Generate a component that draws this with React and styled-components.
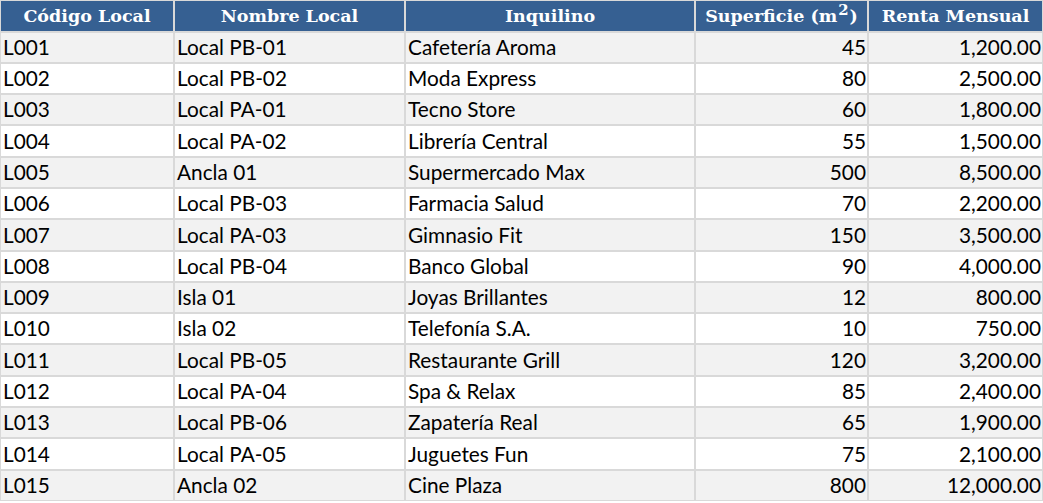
import React from "react";
import styled, { createGlobalStyle } from "styled-components";

const Global = createGlobalStyle`
  html, body { margin: 0; padding: 0; background: #ffffff; }
  body { font-family: Lato, "Liberation Sans", sans-serif; }
`;

const Table = styled.table`
  border-collapse: separate;
  border-spacing: 0;
  table-layout: fixed;
  width: 1043px;
`;

const HeadCell = styled.th`
  background: #366092;
  color: #ffffff;
  font-family: "DejaVu Serif", "Liberation Serif", serif;
  font-weight: bold;
  font-size: 17.5px;
  line-height: 1;
  text-align: center;
  border: 1px solid #d9d9d9;
  height: 27.5px;
  padding: 2px 2px 0;
  white-space: nowrap;
  overflow: hidden;
`;

const Row = styled.tr`
  background: ${(p) => (p.$alt ? "#f2f2f2" : "#ffffff")};
`;

const Cell = styled.td`
  font-family: Lato, "Liberation Sans", sans-serif;
  font-size: 20.8px;
  color: #000000;
  text-align: ${(p) => (p.$num ? "right" : "left")};
  border: 1px solid #d9d9d9;
  height: 29.3px;
  padding: 0 1px 0 2px;
  line-height: 1;
  white-space: nowrap;
  overflow: hidden;
`;

const Sup = styled.sup`
  font-size: 0.85em;
  line-height: 0;
  vertical-align: 0.45em;
  padding: 0 1px;
`;

const data = [
  ["L001", "Local PB-01", "Cafetería Aroma", "45", "1,200.00"],
  ["L002", "Local PB-02", "Moda Express", "80", "2,500.00"],
  ["L003", "Local PA-01", "Tecno Store", "60", "1,800.00"],
  ["L004", "Local PA-02", "Librería Central", "55", "1,500.00"],
  ["L005", "Ancla 01", "Supermercado Max", "500", "8,500.00"],
  ["L006", "Local PB-03", "Farmacia Salud", "70", "2,200.00"],
  ["L007", "Local PA-03", "Gimnasio Fit", "150", "3,500.00"],
  ["L008", "Local PB-04", "Banco Global", "90", "4,000.00"],
  ["L009", "Isla 01", "Joyas Brillantes", "12", "800.00"],
  ["L010", "Isla 02", "Telefonía S.A.", "10", "750.00"],
  ["L011", "Local PB-05", "Restaurante Grill", "120", "3,200.00"],
  ["L012", "Local PA-04", "Spa & Relax", "85", "2,400.00"],
  ["L013", "Local PB-06", "Zapatería Real", "65", "1,900.00"],
  ["L014", "Local PA-05", "Juguetes Fun", "75", "2,100.00"],
  ["L015", "Ancla 02", "Cine Plaza", "800", "12,000.00"],
];

export default function App() {
  return (
    <>
      <Global />
      <Table>
        <colgroup>
          <col style={{ width: "174px" }} />
          <col style={{ width: "231px" }} />
          <col style={{ width: "290px" }} />
          <col style={{ width: "173px" }} />
          <col style={{ width: "175px" }} />
        </colgroup>
        <thead>
          <tr>
            <HeadCell>Código Local</HeadCell>
            <HeadCell>Nombre Local</HeadCell>
            <HeadCell>Inquilino</HeadCell>
            <HeadCell>
              Superficie (m<Sup>2</Sup>)
            </HeadCell>
            <HeadCell>Renta Mensual</HeadCell>
          </tr>
        </thead>
        <tbody>
          {data.map((r, i) => (
            <Row key={r[0]} $alt={i % 2 === 0}>
              <Cell>{r[0]}</Cell>
              <Cell>{r[1]}</Cell>
              <Cell>{r[2]}</Cell>
              <Cell $num>{r[3]}</Cell>
              <Cell $num>{r[4]}</Cell>
            </Row>
          ))}
        </tbody>
      </Table>
    </>
  );
}
